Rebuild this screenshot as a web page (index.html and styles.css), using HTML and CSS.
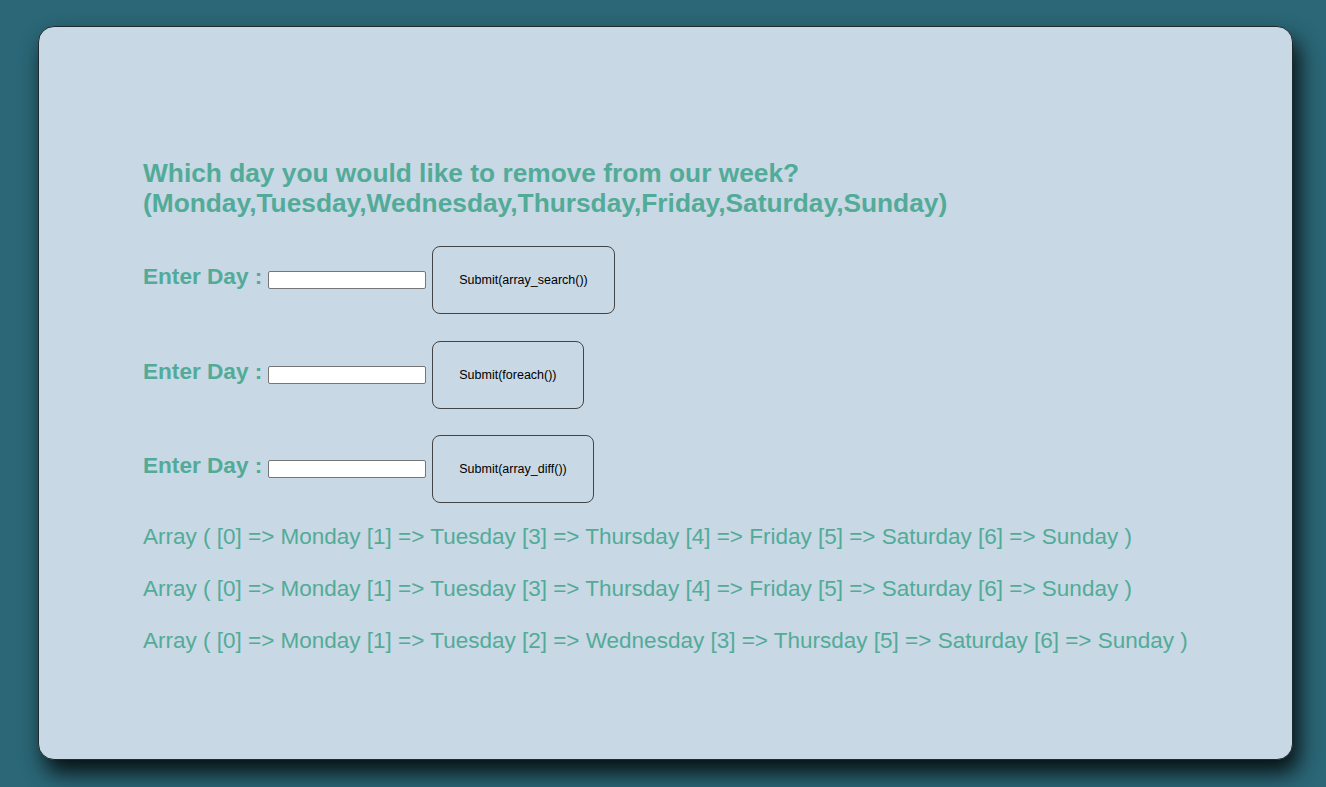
FILE: index.html
```html
<!DOCTYPE html>
<html>
<head>
<meta charset="utf-8">
<link rel="stylesheet" href="styles.css">
</head>
<body>
<div class="card">
  <h2 class="question">Which day you would like to remove from our week?<br>(Monday,Tuesday,Wednesday,Thursday,Friday,Saturday,Sunday)</h2>
  <form class="row">
    <label class="label">Enter Day :</label>
    <input class="field" type="text">
    <button class="btn" type="button">Submit(array_search())</button>
  </form>
  <form class="row">
    <label class="label">Enter Day :</label>
    <input class="field" type="text">
    <button class="btn" type="button">Submit(foreach())</button>
  </form>
  <form class="row">
    <label class="label">Enter Day :</label>
    <input class="field" type="text">
    <button class="btn" type="button">Submit(array_diff())</button>
  </form>
  <div class="results">
    <p class="result">Array ( [0] =&gt; Monday [1] =&gt; Tuesday [3] =&gt; Thursday [4] =&gt; Friday [5] =&gt; Saturday [6] =&gt; Sunday )</p>
    <p class="result">Array ( [0] =&gt; Monday [1] =&gt; Tuesday [3] =&gt; Thursday [4] =&gt; Friday [5] =&gt; Saturday [6] =&gt; Sunday )</p>
    <p class="result">Array ( [0] =&gt; Monday [1] =&gt; Tuesday [2] =&gt; Wednesday [3] =&gt; Thursday [5] =&gt; Saturday [6] =&gt; Sunday )</p>
  </div>
</div>
</body>
</html>
```

FILE: styles.css
```css
html, body {
  margin: 0;
  padding: 0;
}
body {
  background: #2b6777;
  font-family: "Liberation Sans", Arial, sans-serif;
  padding: 26px 33px 27px 38px;
}
.card {
  box-sizing: border-box;
  width: 1255px;
  height: 734px;
  background: #c8d8e4;
  border: 1px solid #1d2b30;
  border-radius: 16px;
  box-shadow: 6px 13px 22px rgba(0, 0, 0, 0.85);
  padding: 131px 104px 0 104px;
  color: #52ab98;
}
.question {
  margin: 0 0 28px 0;
  font-size: 26.3px;
  line-height: 30px;
  font-weight: bold;
}
.row {
  display: flex;
  align-items: center;
  height: 68px;
  margin-bottom: 26.5px;
}
.label {
  font-size: 22.6px;
  font-weight: bold;
  margin-right: 6px;
  padding-bottom: 6px;
}
.field {
  box-sizing: border-box;
  width: 158px;
  height: 18px;
  border: 1px solid #767676;
  border-radius: 2px;
  background: #fff;
  margin: 0 6px 0 0;
  padding: 0;
}
.btn {
  box-sizing: border-box;
  height: 68px;
  padding: 0 26px;
  background: #c8d8e4;
  border: 1px solid #444;
  border-radius: 8px;
  font-family: "Liberation Sans", Arial, sans-serif;
  font-size: 12.5px;
  color: #000;
}
.results {
  margin-top: -19px;
}
.result {
  margin: 0;
  font-size: 22.5px;
  line-height: 52px;
}
```
